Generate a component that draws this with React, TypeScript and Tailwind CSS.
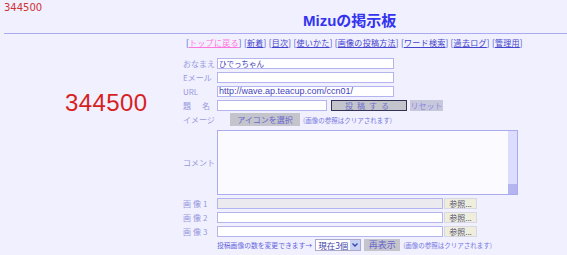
import React from 'react';

const jp = { fontFamily: '"Noto Sans CJK JP", "DejaVu Sans", sans-serif' };

const navItems = ['新着', '目次', '使いかた', '画像の投稿方法', 'ワード検索', '過去ログ', '管理用'];

function Label({ children }: { children: React.ReactNode }) {
  return (
    <div className="w-[34px] shrink-0 text-[8px] leading-[11px] text-[#9999dd] whitespace-nowrap">
      {children}
    </div>
  );
}

function Field({ width, value, gray, latin }: { width: string; value?: string; gray?: boolean; latin?: boolean }) {
  return (
    <div
      className={`${width} h-[11px] border border-[#b4b4ee] ${gray ? 'bg-[#ebebef]' : 'bg-white'} ${latin ? "font-['Liberation_Sans',sans-serif] text-[9px]" : 'text-[7.5px]'} leading-[9px] text-[#4444bb] pl-[1px] overflow-hidden whitespace-nowrap`}
    >
      {value}
    </div>
  );
}

function BrowseButton() {
  return (
    <div className="ml-[1px] w-[33px] h-[11px] bg-[#efeedc] border border-[#d8d8e4] text-[8px] leading-[9px] text-[#555577] text-center">
      参照...
    </div>
  );
}

export default function App() {
  return (
    <div className="w-[567px] h-[255px] bg-[#f0f0ff] overflow-hidden" style={jp}>
      {/* hit counter, small */}
      <div className="pl-[4px] pt-[3px] text-[10px] leading-[9px] text-[#cc3333] font-['DejaVu_Sans',sans-serif]">
        344500
      </div>

      {/* title */}
      <div className="pl-[303px] mt-[1px] text-[15px] leading-[15px] font-bold text-[#3333f0] font-['Liberation_Sans','Noto_Sans_CJK_JP',sans-serif]">
        Mizuの掲示板
      </div>

      <div className="ml-[4px] mt-[5px] h-px bg-[#aaaaee]" />

      {/* nav */}
      <div className="pl-[186px] mt-[4px] text-[8px] tracking-[0.3px] leading-[10px] whitespace-nowrap text-[#4444cc]">
        [<span className="underline text-[#ff77dd]">トップに戻る</span>]
        {navItems.map((n) => (
          <span key={n}>
            {' '}[<span className="underline">{n}</span>]
          </span>
        ))}
      </div>

      <div className="flex mt-[10px]">
        {/* big counter */}
        <div className="w-[183px] shrink-0 pl-[65px] pt-[35px]">
          <div className="text-[24px] leading-[20px] text-[#d81f1f] font-['Liberation_Sans',sans-serif] tracking-[0.4px]">
            344500
          </div>
        </div>

        {/* form */}
        <div className="flex flex-col">
          <div className="flex items-center">
            <Label>おなまえ</Label>
            <Field width="w-[177px]" value="ひでっちゃん" />
          </div>
          <div className="flex items-center mt-[3px]">
            <Label>Eメール</Label>
            <Field width="w-[177px]" />
          </div>
          <div className="flex items-center mt-[3px]">
            <Label>URL</Label>
            <Field width="w-[177px]" value="http://wave.ap.teacup.com/ccn01/" latin />
          </div>
          <div className="flex items-center mt-[3px]">
            <Label>
              <span className="tracking-[11px]">題名</span>
            </Label>
            <Field width="w-[110px]" />
            <div className="ml-[4px] w-[76px] h-[11px] bg-[#c4c4cc] border border-[#333355] text-[8px] leading-[9px] text-[#7070c8] text-center tracking-[4px]">
              投稿する
            </div>
            <div className="ml-[3px] w-[33px] h-[11px] bg-[#c8c8dc] text-[8px] leading-[11px] text-[#8888dd] text-center">
              リセット
            </div>
          </div>
          <div className="flex items-center mt-[2px]">
            <Label>イメージ</Label>
            <div className="ml-[13px] w-[70px] h-[13px] bg-[#c4c4cc] text-[8px] leading-[13px] text-[#6666cc] text-center">
              アイコンを選択
            </div>
            <div className="ml-[3px] text-[6.5px] leading-[10px] text-[#7777dd] whitespace-nowrap">
              (画像の参照はクリアされます)
            </div>
          </div>
          <div className="flex items-center mt-[4px]">
            <Label>コメント</Label>
            <div className="w-[301px] h-[65px] border border-[#aaaaee] bg-[#fafaff] flex justify-end">
              <div className="w-[9px] h-full bg-[#dcdcff] flex flex-col justify-end">
                <div className="h-[10px] bg-[#b4b4f0]" />
              </div>
            </div>
          </div>
          <div className="flex items-center mt-[3px]">
            <Label>
              <span className="tracking-[2px]">画像1</span>
            </Label>
            <Field width="w-[226px]" gray />
            <BrowseButton />
          </div>
          <div className="flex items-center mt-[3px]">
            <Label>
              <span className="tracking-[2px]">画像2</span>
            </Label>
            <Field width="w-[226px]" />
            <BrowseButton />
          </div>
          <div className="flex items-center mt-[3px]">
            <Label>
              <span className="tracking-[2px]">画像3</span>
            </Label>
            <Field width="w-[226px]" />
            <BrowseButton />
          </div>
          <div className="flex items-center mt-[2px] pl-[34px]">
            <div className="text-[6.8px] leading-[10px] text-[#6666dd] whitespace-nowrap">
              投稿画像の数を変更できます→
            </div>
            <div className="ml-[3px] w-[46px] h-[12px] bg-white border border-[#aaaacc] flex items-center">
              <span className="flex-1 pl-[2px] text-[8.5px] leading-[10px] text-[#4444aa] whitespace-nowrap">現在3個</span>
              <div className="w-[10px] h-[10px] bg-[#c8d0f4] flex items-center justify-center">
                <svg width="6" height="4" viewBox="0 0 6 4">
                  <path d="M0.5 0.5 L3 3 L5.5 0.5" stroke="#3344aa" strokeWidth="1.3" fill="none" />
                </svg>
              </div>
            </div>
            <div className="ml-[3px] w-[36px] h-[12px] bg-[#c4c4cc] text-[9px] leading-[12px] text-[#6666cc] text-center">
              再表示
            </div>
            <div className="ml-[3px] text-[6.5px] leading-[10px] text-[#7777dd] whitespace-nowrap">
              (画像の参照はクリアされます)
            </div>
          </div>
        </div>
      </div>
    </div>
  );
}
